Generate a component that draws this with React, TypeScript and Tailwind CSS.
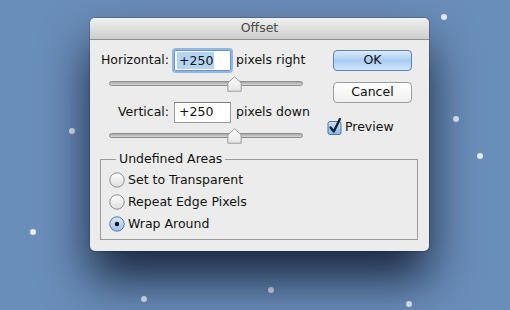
import React from "react";

const font = { fontFamily: '"DejaVu Sans", "Liberation Sans", sans-serif' };

const dots = [
  { x: 72, y: 131 },
  { x: 33, y: 232 },
  { x: 144, y: 299 },
  { x: 271, y: 290 },
  { x: 409, y: 304 },
  { x: 444, y: 17 },
  { x: 456, y: 119 },
  { x: 480, y: 156 },
];

function Slider() {
  return (
    <div className="relative ml-[9px] h-[23px] w-[194px]">
      <div className="absolute left-0 right-0 top-[10px] h-[5px] rounded-full border border-[#8d8d8d] bg-gradient-to-b from-[#a9a9a9] to-[#d6d6d6]" />
      {/* thumb */}
      <svg className="absolute left-[118px] top-[5px]" width="15" height="16" viewBox="0 0 15 16">
        <defs>
          <linearGradient id="thumb" x1="0" y1="0" x2="0" y2="1">
            <stop offset="0" stopColor="#ffffff" />
            <stop offset="1" stopColor="#e4e4e4" />
          </linearGradient>
        </defs>
        <path d="M7.5 0.8 L14.2 7 L14.2 15.2 L0.8 15.2 L0.8 7 Z" fill="url(#thumb)" stroke="#9a9a9a" strokeWidth="1" />
      </svg>
    </div>
  );
}

function Radio({ checked, label }: { checked?: boolean; label: string }) {
  return (
    <div className="flex h-[22px] items-center">
      <svg width="16" height="16" viewBox="0 0 16 16">
        <defs>
          <linearGradient id="radioOff" x1="0" y1="0" x2="0" y2="1">
            <stop offset="0" stopColor="#ffffff" />
            <stop offset="1" stopColor="#dedede" />
          </linearGradient>
          <linearGradient id="radioOn" x1="0" y1="0" x2="0" y2="1">
            <stop offset="0" stopColor="#d8e8fa" />
            <stop offset="1" stopColor="#9cc0ec" />
          </linearGradient>
        </defs>
        <circle
          cx="8"
          cy="8"
          r="7.2"
          fill={checked ? "url(#radioOn)" : "url(#radioOff)"}
          stroke={checked ? "#5479a8" : "#8e8e8e"}
          strokeWidth="1"
        />
        {checked && <circle cx="8" cy="8" r="2.2" fill="#111" />}
      </svg>
      <span className="ml-[3px] text-[12.5px] text-[#111]">{label}</span>
    </div>
  );
}

export default function App() {
  return (
    <div className="relative h-[310px] w-[510px] overflow-hidden bg-[#6a8eba]" style={font}>
      {dots.map((d, i) => (
        <div
          key={i}
          className="absolute h-[6px] w-[6px] -translate-x-1/2 -translate-y-1/2 rounded-full bg-[#e8ecf2]"
          style={{ left: d.x, top: d.y }}
        />
      ))}

      {/* dialog window */}
      <div className="absolute left-[90px] top-[18px] flex h-[233px] w-[339px] flex-col overflow-hidden rounded-[5px] bg-[#ececec] shadow-[0_28px_48px_rgba(10,20,40,0.85),0_0_0_1px_rgba(60,70,90,0.35)]">
        <div className="flex h-[22px] items-center justify-center border-b border-[#8e8e8e] bg-gradient-to-b from-[#f0f0f0] to-[#cdcdcd] text-[12.5px] text-[#4a4a4a]">
          Offset
        </div>

        <div className="flex flex-col pl-[10px] pt-[10px]">
          <div className="flex">
            {/* left column */}
            <div className="flex w-[223px] flex-col">
              <div className="flex h-[21px] items-center text-[12.5px] text-[#111]">
                <span className="w-[69px] text-right">Horizontal:</span>
                <div className="ml-[5px] flex h-[21px] w-[57px] items-center rounded-[2px] bg-white shadow-[0_0_0_2px_#8fb6e6,inset_0_0_0_1px_#6d93c6]">
                  <span className="ml-[3px] bg-[#b5d3f5] pl-[2px] pr-[1px] leading-[17px]">+250</span>
                </div>
                <span className="ml-[5px]">pixels right</span>
              </div>
              <Slider />

              <div className="mt-[8px] flex h-[21px] items-center text-[12.5px] text-[#111]">
                <span className="w-[69px] text-right">Vertical:</span>
                <div className="ml-[5px] flex h-[21px] w-[57px] items-center border border-[#9a9a9a] border-t-[#7d7d7d] bg-white pl-[4px]">
                  +250
                </div>
                <span className="ml-[5px]">pixels down</span>
              </div>
              <Slider />
            </div>

            {/* right column */}
            <div className="flex flex-col">
              <button className="ml-[10px] h-[21px] w-[79px] rounded-[4px] border border-[#5d83b3] bg-gradient-to-b from-[#dcebfb] via-[#a8cdf4] to-[#cfe5fc] text-[12.5px] leading-none text-[#111]">
                OK
              </button>
              <button className="ml-[10px] mt-[11px] h-[21px] w-[79px] rounded-[4px] border border-[#9c9c9c] bg-gradient-to-b from-[#ffffff] to-[#efefef] text-[12.5px] leading-none text-[#111]">
                Cancel
              </button>
              <div className="ml-[4px] mt-[15px] flex items-center">
                <svg width="16" height="18" viewBox="0 0 16 18">
                  <defs>
                    <linearGradient id="cb" x1="0" y1="0" x2="0" y2="1">
                      <stop offset="0" stopColor="#cfe1f7" />
                      <stop offset="1" stopColor="#8cb6ea" />
                    </linearGradient>
                  </defs>
                  <rect x="1" y="3.5" width="13" height="13" rx="2" fill="url(#cb)" stroke="#4a73a8" />
                  <path d="M3.6 9.5 L6.8 13.6 L12.8 1.2" fill="none" stroke="#17233d" strokeWidth="2.4" strokeLinejoin="round" strokeLinecap="round" />
                </svg>
                <span className="ml-[2px] text-[12.5px] text-[#111]">Preview</span>
              </div>
            </div>
          </div>

          <fieldset className="mt-[5px] w-[318px] border border-[#9b9b9b] pb-[4px] pl-[8px]">
            <legend className="ml-[7px] px-[3px] text-[12.5px] leading-[16px] text-[#111]">Undefined Areas</legend>
            <div className="mt-[2px]">
              <Radio label="Set to Transparent" />
              <Radio label="Repeat Edge Pixels" />
              <Radio checked label="Wrap Around" />
            </div>
          </fieldset>
        </div>
      </div>
    </div>
  );
}
